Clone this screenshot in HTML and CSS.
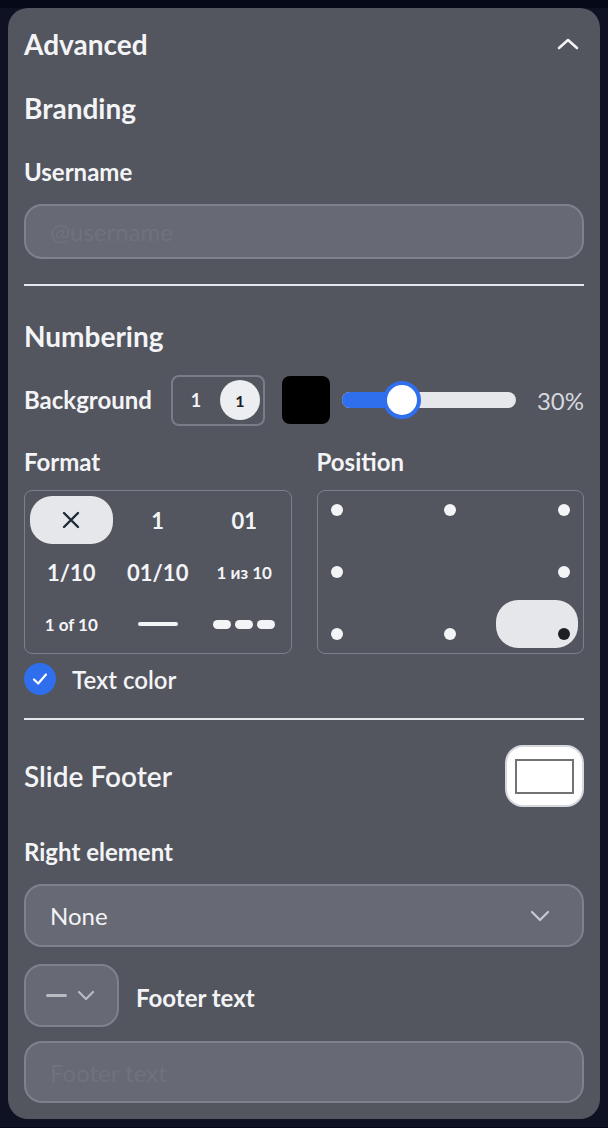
FILE: index.html
```html
<!DOCTYPE html>
<html lang="en">
<head>
  <meta charset="UTF-8">
  <meta name="viewport" content="width=device-width, initial-scale=1.0">
  <title>Advanced</title>
  <link rel="stylesheet" href="styles.css">
</head>
<body>
  <div class="panel">
    <!-- Header -->
    <div class="panel-head">
      <h2>Advanced</h2>
      <svg class="chevron-up" width="22" height="12" viewBox="0 0 22 12">
        <path d="M2 10 L11 2 L20 10" fill="none" stroke="#f3f4f6" stroke-width="2.6" stroke-linecap="round" stroke-linejoin="round"/>
      </svg>
    </div>

    <!-- Branding -->
    <h3 class="section-title">Branding</h3>
    <p class="label label-username">Username</p>
    <input class="field field-username" type="text" placeholder="@username">
    <div class="divider divider-top"></div>

    <!-- Numbering -->
    <h3 class="section-title section-numbering">Numbering</h3>
    <div class="bg-row">
      <span class="label bg-label">Background</span>
      <div class="bg-toggle">
        <span class="plain">1</span>
        <span class="circle">1</span>
      </div>
      <div class="swatch"></div>
      <div class="slider">
        <div class="slider-fill"></div>
        <div class="slider-thumb"></div>
      </div>
      <span class="percent">30%</span>
    </div>

    <div class="two-col">
      <div>
        <p class="label">Format</p>
        <div class="opt-grid">
          <div class="opt selected">
            <svg width="20" height="20" viewBox="0 0 20 20">
              <path d="M3 3 L17 17 M17 3 L3 17" stroke="#1f2937" stroke-width="2.4" stroke-linecap="round"/>
            </svg>
          </div>
          <div class="opt">1</div>
          <div class="opt">01</div>
          <div class="opt">1/10</div>
          <div class="opt">01/10</div>
          <div class="opt small">1 из 10</div>
          <div class="opt small">1 of 10</div>
          <div class="opt"><span class="line"></span></div>
          <div class="opt"><span class="dashes"><i></i><i></i><i></i></span></div>
        </div>
      </div>
      <div>
        <p class="label">Position</p>
        <div class="opt-grid">
          <div class="pos top left"><span class="dot"></span></div>
          <div class="pos top center"><span class="dot"></span></div>
          <div class="pos top right"><span class="dot"></span></div>
          <div class="pos mid left"><span class="dot"></span></div>
          <div class="pos mid center"></div>
          <div class="pos mid right"><span class="dot"></span></div>
          <div class="pos bottom left"><span class="dot"></span></div>
          <div class="pos bottom center"><span class="dot"></span></div>
          <div class="pos bottom right selected"><span class="dot"></span></div>
        </div>
      </div>
    </div>

    <div class="check-row">
      <span class="check">
        <svg width="18" height="18" viewBox="0 0 18 18">
          <path d="M3 9.5 L7.2 13.5 L15 4.5" fill="none" stroke="#fff" stroke-width="2.2" stroke-linecap="round" stroke-linejoin="round"/>
        </svg>
      </span>
      <span class="check-text">Text color</span>
    </div>
    <div class="divider divider-mid"></div>

    <!-- Slide Footer -->
    <div class="footer-head">
      <h3 class="footer-title">Slide Footer</h3>
      <div class="footer-toggle"><span class="frame"></span></div>
    </div>
    <p class="label label-right">Right element</p>
    <div class="select">
      <span>None</span>
      <svg width="20" height="12" viewBox="0 0 20 12">
        <path d="M2 2 L10 10 L18 2" fill="none" stroke="#c9cbd2" stroke-width="2.2" stroke-linecap="round" stroke-linejoin="round"/>
      </svg>
    </div>
    <div class="footer-row">
      <div class="mini-select">
        <span class="mini-dash"></span>
        <svg width="18" height="11" viewBox="0 0 18 11">
          <path d="M2 2 L9 9 L16 2" fill="none" stroke="#b9bbc3" stroke-width="2.2" stroke-linecap="round" stroke-linejoin="round"/>
        </svg>
      </div>
      <span class="label footer-label">Footer text</span>
    </div>
    <input class="field field-footer" type="text" placeholder="Footer text">
  </div>
</body>
</html>
```

FILE: styles.css
```css
/* Page */
body {
  margin: 0;
  padding: 8px;
  font-family: Lato, "Noto Sans", sans-serif;
  color: #f3f4f6;
  background: linear-gradient(#060918 0, #060918 8px, #0f1223 8px);
}
/* Panel */
.panel {
  background-color: #53555f;
  border-radius: 20px;
  padding: 16px 16px 16px;
  display: flex;
  flex-direction: column;
}
.panel-head {
  height: 40px;
  display: flex;
  align-items: center;
  justify-content: space-between;
}
.panel-head h2 {
  margin: 0;
  font-size: 28px;
  font-weight: 700;
}
.chevron-up {
  margin-right: 5px;
}
.section-title {
  margin: 28px 0 0;
  font-size: 28px;
  line-height: 32px;
  font-weight: 700;
}
.section-numbering {
  margin-top: 34px;
}
.label {
  margin: 0;
  font-size: 24px;
  line-height: 28px;
  font-weight: 700;
}
.label-username {
  margin-top: 34px;
}
/* Inputs */
.field {
  box-sizing: border-box;
  width: 100%;
  background-color: #676974;
  border: 2px solid #7f818b;
  border-radius: 18px;
  padding: 0 24px;
  font-family: inherit;
  font-size: 24px;
  color: #f3f4f6;
  outline: none;
}
.field::placeholder {
  color: #70727d;
}
.field-username {
  margin-top: 18px;
  height: 55px;
}
.field-footer {
  margin-top: 14px;
  height: 62px;
}
.divider {
  height: 2px;
  background-color: #e5e7eb;
}
.divider-top {
  margin-top: 25px;
}
.divider-mid {
  margin-top: 23px;
}
/* Background row */
.bg-row {
  margin-top: 22px;
  height: 52px;
  display: flex;
  align-items: center;
}
.bg-label {
  width: 147px;
}
.bg-toggle {
  box-sizing: border-box;
  height: 51px;
  width: 94px;
  border: 2px solid #7a7c87;
  border-radius: 8px;
  display: flex;
  align-items: center;
  padding: 0 3px 0 7px;
  gap: 8px;
  font-size: 18px;
  font-weight: 700;
}
.bg-toggle .plain {
  width: 32px;
  text-align: center;
}
.bg-toggle .circle {
  width: 40px;
  height: 40px;
  border-radius: 50%;
  background-color: #eceef2;
  color: #1f2023;
  font-size: 16px;
  display: flex;
  align-items: center;
  justify-content: center;
}
.swatch {
  width: 48px;
  height: 48px;
  margin-left: 17px;
  background-color: #000;
  border-radius: 8px;
}
.slider {
  position: relative;
  margin-left: 12px;
  width: 174px;
  height: 16px;
  border-radius: 8px;
  background-color: #e5e7eb;
}
.slider-fill {
  width: 60px;
  height: 100%;
  border-radius: 8px 0 0 8px;
  background-color: #2f6fed;
}
.slider-thumb {
  position: absolute;
  left: 41px;
  top: -11px;
  box-sizing: border-box;
  width: 38px;
  height: 38px;
  border-radius: 50%;
  background-color: #fff;
  border: 4px solid #2f6fed;
}
.percent {
  margin-left: auto;
  font-size: 24px;
  color: #d6d8de;
}
/* Format / Position */
.two-col {
  margin-top: 22px;
  display: grid;
  grid-template-columns: 1fr 1fr;
  column-gap: 25px;
}
.opt-grid {
  margin-top: 14px;
  border: 1px solid #7d7f8a;
  border-radius: 8px;
  padding: 5px;
  display: grid;
  grid-template-columns: repeat(3, 1fr);
  grid-auto-rows: 48px;
  gap: 4px;
}
.opt {
  display: flex;
  align-items: center;
  justify-content: center;
  font-size: 22px;
  font-weight: 700;
  color: #f3f4f6;
  border-radius: 22px;
}
.opt.small {
  font-size: 17px;
}
.opt.selected,
.pos.selected {
  background-color: #e5e7eb;
}
.line {
  width: 40px;
  height: 4px;
  border-radius: 2px;
  background-color: #f3f4f6;
}
.dashes {
  display: flex;
  gap: 4px;
}
.dashes i {
  width: 18px;
  height: 9px;
  border-radius: 5px;
  background-color: #f3f4f6;
}
.pos {
  display: flex;
  padding: 8px;
  border-radius: 22px;
}
.pos.top { align-items: flex-start; }
.pos.mid { align-items: center; }
.pos.bottom { align-items: flex-end; }
.pos.left { justify-content: flex-start; }
.pos.center { justify-content: center; }
.pos.right { justify-content: flex-end; }
.dot {
  width: 12px;
  height: 12px;
  border-radius: 50%;
  background-color: #f3f4f6;
}
.pos.selected .dot {
  background-color: #1f2026;
}
/* Text color */
.check-row {
  margin-top: 9px;
  height: 32px;
  display: flex;
  align-items: center;
  gap: 16px;
}
.check {
  width: 32px;
  height: 32px;
  border-radius: 50%;
  background-color: #2f6fed;
  display: flex;
  align-items: center;
  justify-content: center;
}
.check-text {
  font-size: 24px;
  font-weight: 600;
}
/* Slide footer */
.footer-head {
  margin-top: 25px;
  height: 62px;
  display: flex;
  align-items: center;
  justify-content: space-between;
}
.footer-title {
  margin: 0;
  font-size: 28px;
  font-weight: 600;
}
.footer-toggle {
  box-sizing: border-box;
  width: 79px;
  height: 62px;
  border-radius: 18px;
  border: 2px solid #d7d9de;
  background-color: #fff;
  display: flex;
  align-items: center;
  justify-content: center;
}
.frame {
  box-sizing: border-box;
  width: 59px;
  height: 35px;
  border: 2px solid #737373;
}
.label-right {
  margin-top: 31px;
}
.select {
  box-sizing: border-box;
  margin-top: 18px;
  height: 63px;
  background-color: #676974;
  border: 2px solid #7f818b;
  border-radius: 18px;
  padding: 0 32px 0 24px;
  display: flex;
  align-items: center;
  justify-content: space-between;
  font-size: 24px;
}
.footer-row {
  margin-top: 17px;
  display: flex;
  align-items: center;
  gap: 17px;
}
.footer-label {
  padding-top: 4px;
}
.mini-select {
  box-sizing: border-box;
  width: 95px;
  height: 63px;
  background-color: #676974;
  border: 2px solid #7f818b;
  border-radius: 18px;
  display: flex;
  align-items: center;
  padding-left: 20px;
  gap: 10px;
}
.mini-dash {
  width: 21px;
  height: 3px;
  border-radius: 2px;
  background-color: #b9bbc3;
}
```
